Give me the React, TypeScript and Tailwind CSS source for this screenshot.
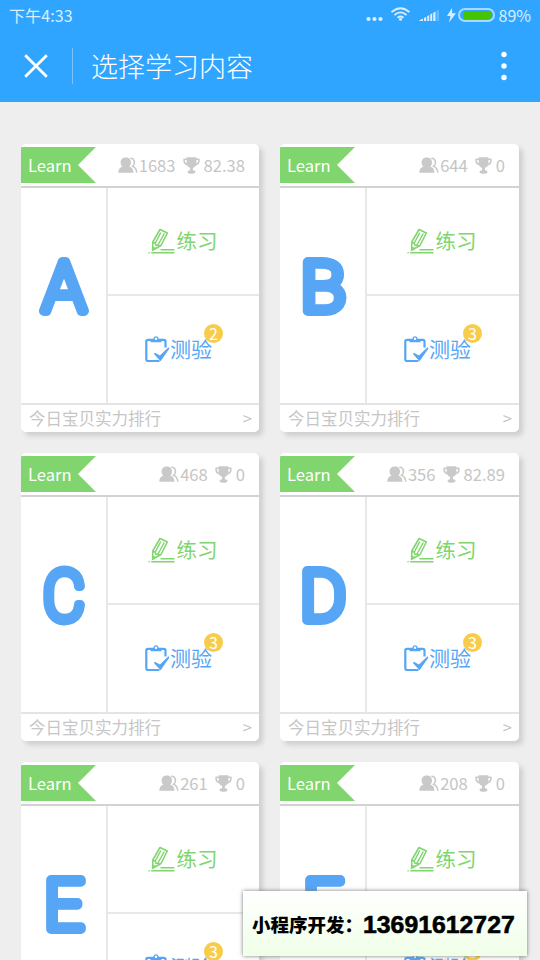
import React from "react";

type Lesson = {
  letter: string;
  width: number;
  learners: string;
  score: string;
  quizzes: number;
};

// width is the drawn width of the letter, without its outline
const lessons: Lesson[] = [
  { letter: "A", width: 42, learners: "1683", score: "82.38", quizzes: 2 },
  { letter: "B", width: 44, learners: "644", score: "0", quizzes: 3 },
  { letter: "C", width: 41, learners: "468", score: "0", quizzes: 3 },
  { letter: "D", width: 45, learners: "356", score: "82.89", quizzes: 3 },
  { letter: "E", width: 39, learners: "261", score: "0", quizzes: 3 },
  { letter: "F", width: 39, learners: "208", score: "0", quizzes: 3 },
];

function UsersIcon() {
  return (
    <svg width="20" height="17" viewBox="0 0 20 17" fill="#c9c9c9">
      <path d="M7.800.5c3.200 0 5.200 2 5.200 4.900 0 1.800-.7 3.300-1.900 4.200 2.200.8 4.200 2 4.400 6.100H.3c.2-4.100 2.300-5.300 4.300-6.100-1.300-.9-2-2.400-2-4.200C2.600 2.500 4.700.5 7.800.5z" />
      <path d="M12.300 1.200c4.200-.2 5.700 5 2.200 8 2.200.8 3.900 2.500 4.300 6.500" fill="none" stroke="#c9c9c9" strokeWidth="1.500" />
    </svg>
  );
}

function TrophyIcon() {
  return (
    <svg width="17" height="17" viewBox="0 0 17 17" fill="#c9c9c9">
      <path d="M3.600.3h9.800v5.200c0 3.200-1.400 4.700-3.500 5.300v2.400c1.700.1 2.600.7 2.600 1.700 0 1.200-1.700 1.800-4 1.800s-4-.6-4-1.800c0-1 .9-1.600 2.600-1.700v-2.400C5 10.200 3.600 8.700 3.600 5.500z" />
      <path d="M4 2.300H1.200C.8 5.300 2.200 7.300 5 8M13 2.300h2.800c.4 3-1 5-3.800 5.700" fill="none" stroke="#c9c9c9" strokeWidth="1.600" />
    </svg>
  );
}

function PencilIcon() {
  return (
    <svg width="28" height="26" viewBox="0 0 28 26" fill="none" stroke="#80d56f" strokeWidth="1.600">
      <path d="M12 1.500 19.300 5 13 17.500 4.600 22.300 4.800 14z" strokeLinejoin="round" />
      <path d="m12.800 4.500-5.500 10.500M16.300 5.500l-6.300 11.500M5 14.500l2 .5 1 2.500 2.500-.5 1 1.500M5 19.500l2.500 1" strokeWidth="1.500" />
      <path d="M12.500 21.800H26.500M3.200 24.800h23.300M.5 24.800h1.200" strokeWidth="1.600" />
    </svg>
  );
}

function QuizIcon() {
  return (
    <svg width="25" height="27" viewBox="0 0 25 27" fill="none" stroke="#56a6f5">
      <path d="M20.500 11.500V5.500q0-1.700-1.700-1.700H3Q1.300 3.800 1.300 5.500v17.800Q1.300 25 3 25h11.500" strokeWidth="2.200" />
      <path d="M5.500 4.800h11" strokeWidth="3" />
      <circle cx="11" cy="2.700" r="1.900" strokeWidth="1.300" fill="white" />
      <path d="m9.500 17.500 5.500 3 8.800-8.500-8.300 12z" fill="#56a6f5" strokeWidth="1.600" />
    </svg>
  );
}

function BigLetter({ letter, width }: { letter: string; width: number }) {
  return (
    <svg width="68" height="100" viewBox="0 0 68 100">
      <text
        x={34 - width / 2}
        y="74.500"
        textLength={width}
        lengthAdjust="spacingAndGlyphs"
        className="fill-[#56a6f5] stroke-[#56a6f5] font-['Roboto',sans-serif] text-[68px] font-thin"
        strokeWidth="10"
        strokeLinejoin="round"
      >
        {letter}
      </text>
    </svg>
  );
}

function LessonCard({ lesson }: { lesson: Lesson }) {
  return (
    <div className="flex h-[288px] flex-col overflow-hidden rounded-[5px] bg-white">
      <div className="flex h-[42px] justify-between pt-[3px]">
        <div className="h-9 w-[75px] bg-[#80d56f] pl-[7px] text-[16.600px] leading-[36px] text-white [clip-path:polygon(0_0,100%_0,76%_50%,100%_100%,0_100%)]">
          Learn
        </div>
        <div className="flex h-9 items-center pr-[14px] text-[16.600px] text-[#c5c5c5]">
          <UsersIcon />
          <span className="ml-[1px]">{lesson.learners}</span>
          <span className="mr-1 ml-[7px]">
            <TrophyIcon />
          </span>
          <span>{lesson.score}</span>
        </div>
      </div>
      <div className="flex h-[217px] border-t-2 border-[#d2d2d2]">
        <div className="flex w-[87px] items-center justify-center border-r-2 border-[#e8e8e8] pb-[19px]">
          <BigLetter letter={lesson.letter} width={lesson.width} />
        </div>
        <div className="flex flex-1 flex-col">
          <div className="flex h-[108px] items-center border-b-2 border-[#e8e8e8] pb-px pl-10 text-[#80d56f]">
            <PencilIcon />
            <span className="ml-[0.500px] text-[20.500px]">练习</span>
          </div>
          <div className="flex flex-1 items-center pb-px pl-[37px] text-[#56a6f5]">
            <QuizIcon />
            <span className="relative text-[21px]">
              测验
              <span className="absolute -top-[9px] left-[34px] flex size-[19px] items-center justify-center rounded-full bg-[#f7cc4b] pb-px text-base text-white">
                {lesson.quizzes}
              </span>
            </span>
          </div>
        </div>
      </div>
      <div className="flex h-[29px] items-center justify-between border-t-2 border-[#e4e4e4] pr-[7px] pl-2 text-[16.500px] text-[#c6c6c6]">
        <span>今日宝贝实力排行</span>
        <span>&gt;</span>
      </div>
    </div>
  );
}

function StatusBar() {
  return (
    <div className="flex h-[30px] items-center justify-between pr-[9px] pl-[9px] text-base text-[#d8eeff]">
      <span className="tracking-[0.1px]">下午4:33</span>
      <div className="flex items-center">
        <svg width="94" height="20" viewBox="0 0 94 20" fill="#d8eeff">
          <circle cx="2.500" cy="14" r="2.100" />
          <circle cx="8.500" cy="14" r="2.100" />
          <circle cx="14.500" cy="14" r="2.100" />
          <g fill="none" stroke="#d8eeff" strokeWidth="1.800">
            <path d="M25.500 7.200q9-8 18 0M28.500 10q6-5.200 12 0M31.500 12.700q3-2.500 6 0" />
          </g>
          <circle cx="34.500" cy="14.300" r="1.500" />
          <path d="M53.500 16v-.8l3.500-1.600V16zM58 16v-3l2.200-1.300V16zM61.200 16v-4.800l2-1.200v6zM64.200 16V9.500l2-1.300V16zM67.200 16V7.700l2.300-1.300V16z" />
          <path d="M70.500 16V6l2.500-1.800V16z" opacity=".3" />
          <path d="m86 3-5 8h3.500L83 17.500l7-9.300h-3.800z" />
        </svg>
        <div className="-ml-[2px] h-[14px] w-[37px] rounded-full border-2 border-[#a8daff] py-px pr-px pl-1">
          <div className="h-full rounded-r-full bg-[#45c400]" />
        </div>
        <span className="ml-[4px]">89%</span>
      </div>
    </div>
  );
}

export default function App() {
  return (
    <div className="relative h-[960px] w-[540px] overflow-hidden bg-[#eeeeee] font-['Noto_Sans_CJK_SC',sans-serif]">
      <header className="h-[102px] bg-[#30a5ff] text-white">
        <StatusBar />
        <div className="flex h-[72px] items-center pr-[30px] pl-6">
          <svg width="24" height="24" viewBox="0 0 24 24" stroke="white" strokeWidth="2.800">
            <path d="m1.200 1.200 21.600 21.600M22.800 1.200l-21.600 21.600" />
          </svg>
          <div className="ml-6 h-9 w-px bg-[#79c4ff]" />
          <h1 className="ml-[18px] flex-1 text-[27px] font-light">选择学习内容</h1>
          <svg width="12" height="32" viewBox="0 0 12 32" fill="white">
            <circle cx="6" cy="4.500" r="2.700" />
            <circle cx="6" cy="16" r="2.700" />
            <circle cx="6" cy="27.500" r="2.700" />
          </svg>
        </div>
      </header>

      <main className="grid grid-cols-[238px_239px] gap-[21px] px-[21px] pt-[42px]">
        {lessons.map((lesson) => (
          <div key={lesson.letter} className="rounded-[5px] shadow-[4px_4px_5px_#cfcfcf]">
            <LessonCard lesson={lesson} />
          </div>
        ))}
      </main>

      <div className="absolute top-[891px] left-[243px] flex h-[65px] w-[284px] items-center bg-linear-to-b from-white to-[#f0ffe8] pt-[3px] pl-[9px] text-black shadow-[0_0_4px_#777]">
        <span className="text-[18.500px] font-black">小程序开发：</span>
        <span className="font-['Liberation_Sans',sans-serif] text-[24.800px] font-bold [-webkit-text-stroke:0.6px_black]">13691612727</span>
      </div>
    </div>
  );
}
